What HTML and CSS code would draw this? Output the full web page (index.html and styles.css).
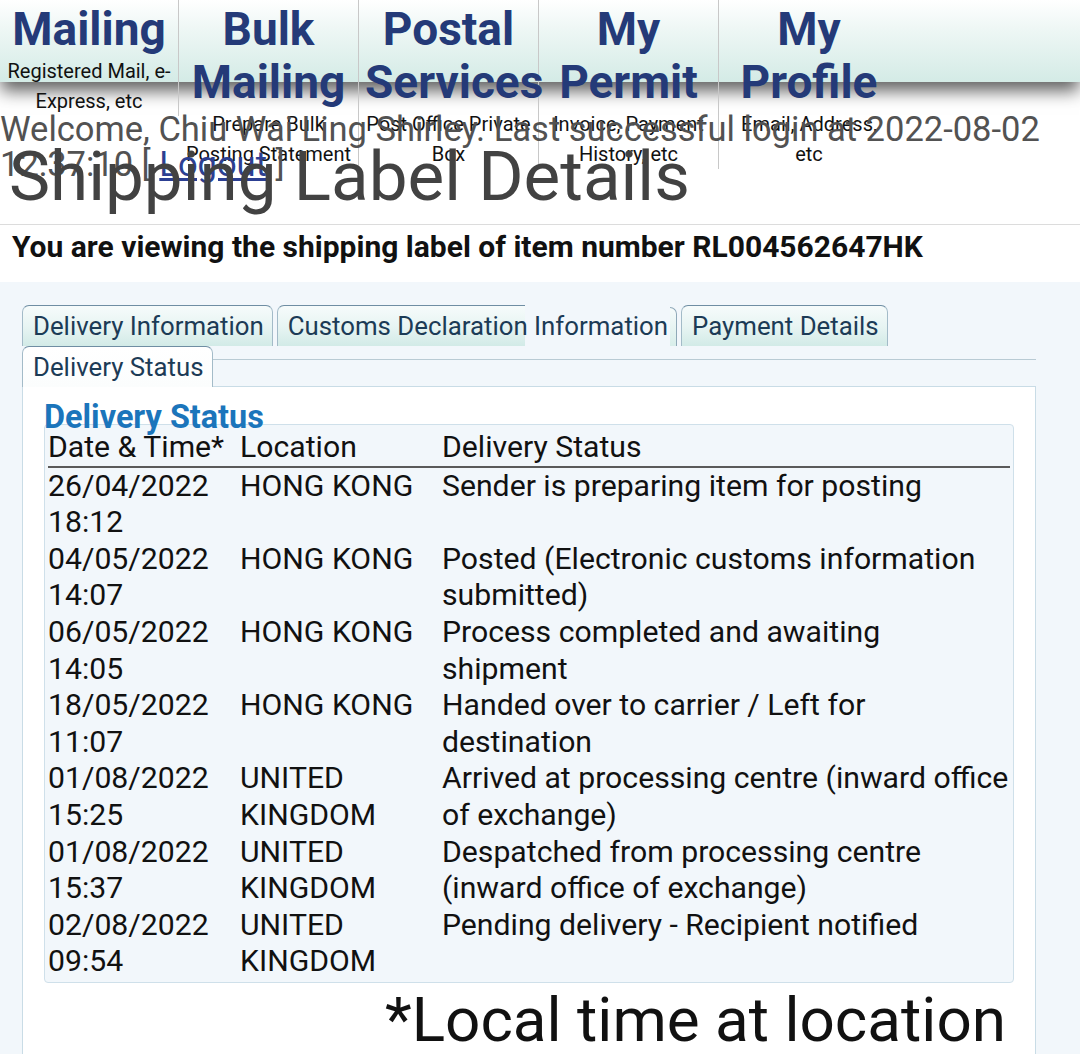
FILE: index.html
```html
<!DOCTYPE html>
<html lang="en">
<head>
<meta charset="utf-8">
<title>Shipping Label Details</title>
<link rel="stylesheet" href="styles.css">
</head>
<body>
<header class="masthead">
  <nav class="topnav">
    <ul class="menu">
      <li class="menu-item"><a class="menu-title" href="#">Mailing</a><span class="menu-desc">Registered Mail, e-Express, etc</span></li>
      <li class="menu-item"><a class="menu-title" href="#">Bulk Mailing</a><span class="menu-desc">Prepare Bulk Posting Statement</span></li>
      <li class="menu-item"><a class="menu-title" href="#">Postal Services</a><span class="menu-desc">Post Office Private Box</span></li>
      <li class="menu-item"><a class="menu-title" href="#">My Permit</a><span class="menu-desc">Invoice, Payment History, etc</span></li>
      <li class="menu-item"><a class="menu-title" href="#">My Profile</a><span class="menu-desc">Email, Address, etc</span></li>
    </ul>
  </nav>
  <p class="welcome">Welcome, Chiu Wai Ling Shirley. Last successful login at 2022-08-02 12:37:10 [ <a class="logout" href="#">Logout</a> ]</p>
</header>
<main class="content">
  <h1 class="page-title">Shipping Label Details</h1>
  <p class="item-note">You are viewing the shipping label of item number RL004562647HK</p>
  <section class="tab-area">
    <ul class="tabs">
      <li class="tab">Delivery Information</li>
      <li class="tab tab-split">Customs Declaration Information</li>
      <li class="tab">Payment Details</li>
      <li class="tab tab-active">Delivery Status</li>
    </ul>
    <div class="panel">
      <h3 class="panel-title">Delivery Status</h3>
      <div class="status-box">
        <table class="status-table">
          <colgroup><col class="col-date"><col class="col-loc"><col></colgroup>
          <thead>
            <tr><th>Date &amp; Time*</th><th>Location</th><th>Delivery Status</th></tr>
          </thead>
          <tbody>
            <tr><td>26/04/2022 18:12</td><td>HONG KONG</td><td>Sender is preparing item for posting</td></tr>
            <tr><td>04/05/2022 14:07</td><td>HONG KONG</td><td>Posted (Electronic customs information submitted)</td></tr>
            <tr><td>06/05/2022 14:05</td><td>HONG KONG</td><td>Process completed and awaiting shipment</td></tr>
            <tr><td>18/05/2022 11:07</td><td>HONG KONG</td><td>Handed over to carrier / Left for destination</td></tr>
            <tr><td>01/08/2022 15:25</td><td>UNITED KINGDOM</td><td>Arrived at processing centre (inward office of exchange)</td></tr>
            <tr><td>01/08/2022 15:37</td><td>UNITED KINGDOM</td><td>Despatched from processing centre (inward office of exchange)</td></tr>
            <tr><td>02/08/2022 09:54</td><td>UNITED KINGDOM</td><td>Pending delivery - Recipient notified</td></tr>
          </tbody>
        </table>
      </div>
      <p class="footnote">*Local time at location</p>
    </div>
  </section>
</main>
</body>
</html>
```
FILE: styles.css
```css
html, body {
  margin: 0;
  padding: 0;
  background: #ffffff;
  font-family: Roboto, "Noto Sans", "Liberation Sans", sans-serif;
}

.masthead {
  height: 137px;
}

.topnav {
  height: 82px;
  background: linear-gradient(to bottom, #ffffff 0%, #eef7f5 35%, #d4ebe6 100%);
  box-shadow: 0 10px 16px -1px rgba(0, 0, 0, 0.62);
}

.menu {
  list-style: none;
  margin: 0;
  padding: 0;
  display: flex;
  align-items: flex-start;
}

.menu-item {
  width: 179px;
  padding: 3px 6px 0;
  box-sizing: border-box;
  text-align: center;
  border-right: 1px solid #c8c8c8;
  flex: none;
}

.menu-item + .menu-item {
  width: 180px;
}

.menu-item:last-child {
  border-right: none;
}

.menu-title {
  display: block;
  font-size: 46px;
  line-height: 53px;
  font-weight: 700;
  color: #243a78;
  text-decoration: none;
}

.menu-desc {
  display: block;
  font-size: 20px;
  line-height: 30px;
  color: #111111;
}

.welcome {
  margin: 30px 0 0;
  font-size: 34.5px;
  line-height: 35px;
  color: #525252;
}

.logout {
  color: #2c3f92;
  text-decoration: underline;
}

.page-title {
  margin: 0;
  padding: 0 9px 7px;
  font-size: 69.2px;
  line-height: 80px;
  font-weight: 400;
  color: #424242;
  border-bottom: 1px solid #dcdcdc;
}

.item-note {
  margin: 4px 0 0;
  padding: 0 12px;
  font-size: 30px;
  font-weight: 700;
  line-height: normal;
  color: #111111;
}

.tab-area {
  margin-top: 18px;
  padding: 23px 44px 20px 22px;
  background: #f2f7fb;
}

.tabs {
  list-style: none;
  margin: 0;
  padding: 0;
  height: 54px;
  display: flex;
  flex-wrap: wrap;
  align-content: flex-start;
  column-gap: 4px;
  border-bottom: 1px solid #b9cbd4;
}

.tab {
  position: relative;
  z-index: 1;
  height: 40px;
  line-height: 40px;
  padding: 0 8px 0 10px;
  font-size: 25.8px;
  color: #1c3b56;
  border: 1px solid #a3bbc8;
  border-top-color: #6f8ea3;
  border-bottom: none;
  border-radius: 7px 7px 0 0;
  background: linear-gradient(to bottom, #f6fbfb 0%, #e6f4f2 55%, #d2ebe7 100%);
}

.tab-split {
  border: none;
  background: none;
  padding: 1px 9px 0 11px;
}

.tab-split::before {
  content: "";
  position: absolute;
  left: 0;
  top: 0;
  width: 248px;
  height: 41px;
  box-sizing: border-box;
  border-left: 1px solid #a3bbc8;
  border-top: 1px solid #6f8ea3;
  border-radius: 7px 0 0 0;
  background: linear-gradient(to bottom, #f6fbfb 0%, #e6f4f2 55%, #d2ebe7 100%);
  z-index: -1;
}

.tab-split::after {
  content: "";
  position: absolute;
  right: 0;
  top: 2px;
  width: 7px;
  height: 39px;
  box-sizing: border-box;
  border-right: 1px solid #8fa9b8;
  border-top: 1px solid #8fa9b8;
  border-radius: 0 7px 0 0;
  background: linear-gradient(to bottom, #f6fbfb 0%, #d8eeea 100%);
  z-index: -1;
}

.tab-active {
  background: linear-gradient(to bottom, #ffffff 0%, #fbfdfd 100%);
}

.panel {
  margin-top: 26px;
  padding: 15px 21px 20px;
  background: #ffffff;
  border: 1px solid #c9dce6;
}

.panel-title {
  margin: 0 0 -8px;
  font-size: 32.4px;
  line-height: 30px;
  font-weight: 700;
  color: #1b75bb;
}

.status-box {
  background: #f2f7fb;
  border: 1px solid #cfe0ea;
  border-radius: 4px;
  padding: 4px 3px 2px;
}

.status-table {
  width: 100%;
  border-collapse: collapse;
  table-layout: fixed;
  font-size: 30.2px;
  line-height: 36.6px;
  color: #111111;
}

.col-date {
  width: 192px;
}

.col-loc {
  width: 202px;
}

.status-table th {
  font-weight: 400;
  text-align: left;
  padding: 0;
  border-bottom: 2px solid #5a5a5a;
}

.status-table td {
  padding: 0;
  vertical-align: top;
}

.footnote {
  margin: 0;
  padding-right: 8px;
  text-align: right;
  font-size: 62px;
  line-height: normal;
  color: #111111;
}
```
